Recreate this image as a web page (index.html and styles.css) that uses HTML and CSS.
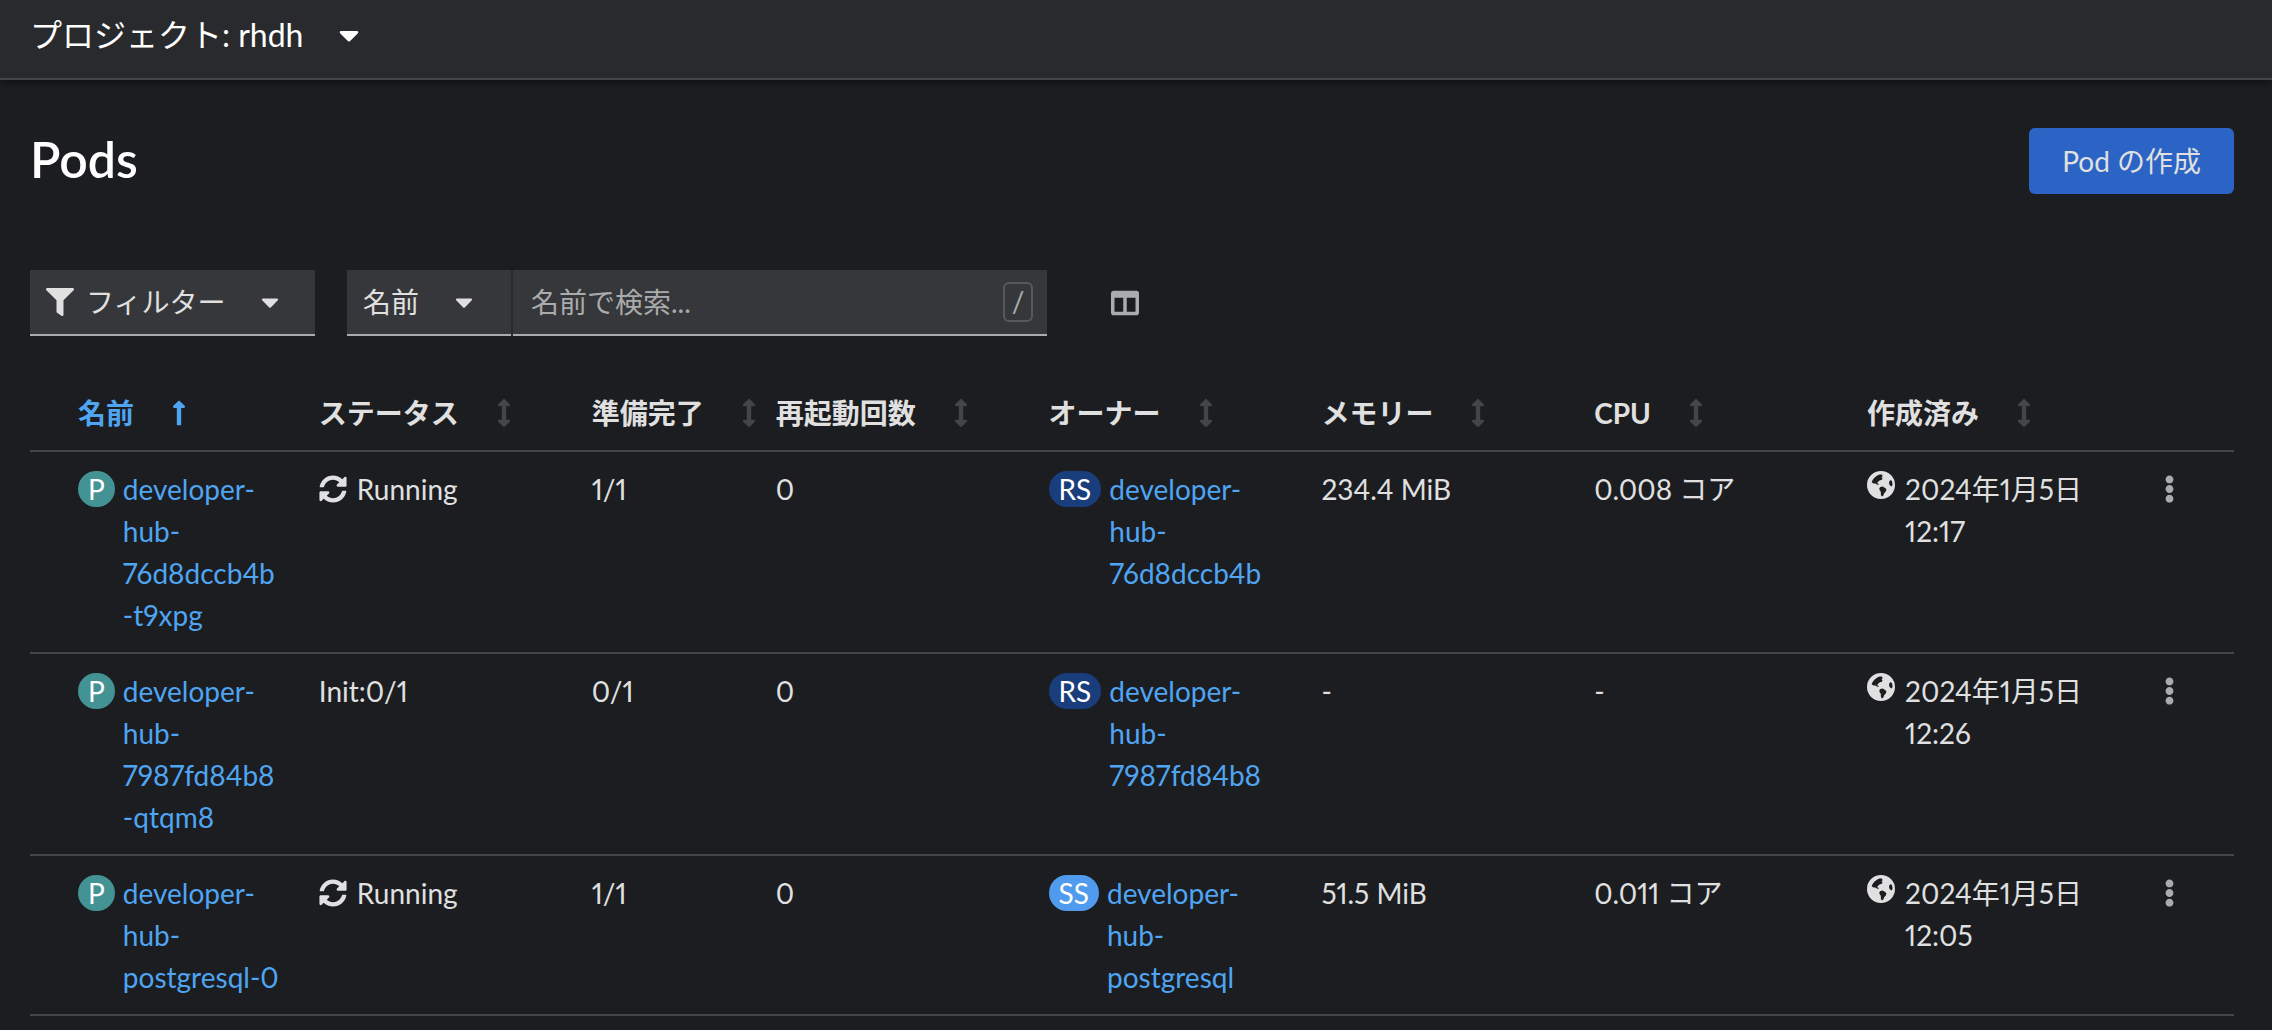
FILE: index.html
```html
<!DOCTYPE html>
<html lang="ja">
<head>
    <meta charset="utf-8">
    <title>Pods</title>
    <link rel="stylesheet" href="styles.css">
</head>
<body>
<!-- Shared icons -->
<svg class="icon-defs" aria-hidden="true">
    <symbol id="caret" viewBox="0 0 320 512"><path d="M31.3 192h257.3c17.8 0 26.7 21.5 14.1 34.1L174.1 354.8c-7.8 7.8-20.5 7.8-28.3 0L17.2 226.1C4.6 213.5 13.5 192 31.3 192z"/></symbol>
    <symbol id="filter" viewBox="0 0 512 512"><path d="M487.976 0H24.028C2.71 0-8.047 25.866 7.058 40.971L192 225.941V432c0 7.831 3.821 15.17 10.237 19.662l80 55.98C298.02 518.69 320 507.493 320 487.98V225.941l184.947-184.97C520.021 25.896 509.338 0 487.976 0z"/></symbol>
    <symbol id="columns" viewBox="0 0 512 512"><path d="M464 32H48C21.49 32 0 53.49 0 80v352c0 26.51 21.49 48 48 48h416c26.51 0 48-21.49 48-48V80c0-26.51-21.49-48-48-48zM224 416H64V160h160v256zm224 0H288V160h160v256z"/></symbol>
    <symbol id="arrow-up" viewBox="0 0 256 512"><path d="M88 166.059V468c0 6.627 5.373 12 12 12h56c6.627 0 12-5.373 12-12V166.059h46.059c21.382 0 32.09-25.851 16.971-40.971l-86.059-86.059c-9.373-9.373-24.569-9.373-33.941 0l-86.059 86.059c-15.119 15.119-4.411 40.971 16.971 40.971H88z"/></symbol>
    <symbol id="arrows-v" viewBox="0 0 256 512"><path d="M214.059 377.941H168V134.059h46.059c21.382 0 32.09-25.851 16.971-40.971L144.971 7.029c-9.373-9.373-24.568-9.373-33.941 0L24.971 93.088c-15.119 15.119-4.411 40.971 16.971 40.971H88v243.882H41.941c-21.382 0-32.09 25.851-16.971 40.971l86.059 86.059c9.373 9.373 24.568 9.373 33.941 0l86.059-86.059c15.12-15.119 4.412-40.971-16.97-40.971z"/></symbol>
    <symbol id="sync" viewBox="0 0 512 512"><path d="M370.72 133.28C339.458 104.008 298.888 87.962 255.848 88c-77.458.068-144.328 53.178-162.791 126.85-1.344 5.363-6.122 9.15-11.651 9.15H24.103c-7.498 0-13.194-6.807-11.807-14.176C33.933 94.924 134.813 8 256 8c66.448 0 126.791 26.136 171.315 68.685L463.03 40.97C478.149 25.851 504 36.559 504 57.941V192c0 13.255-10.745 24-24 24H345.941c-21.382 0-32.09-25.851-16.971-40.971l41.75-41.749zM32 296h134.059c21.382 0 32.09 25.851 16.971 40.971l-41.75 41.75c31.262 29.273 71.835 45.319 114.876 45.28 77.418-.07 144.315-53.144 162.787-126.849 1.344-5.363 6.122-9.15 11.651-9.15h57.304c7.498 0 13.194 6.807 11.807 14.176C478.067 417.076 377.187 504 256 504c-66.448 0-126.791-26.136-171.315-68.685L48.97 471.03C33.851 486.149 8 475.441 8 454.059V320c0-13.255 10.745-24 24-24z"/></symbol>
    <symbol id="globe" viewBox="0 0 28 28"><path fill-rule="evenodd" d="M14 0a14 14 0 1 0 0 28a14 14 0 0 0 0-28zM12.500 3.400l2.300.2.900 1.600-1.300 1.100 1.200 1-1 1.700-1.700.2-1.800 1.500-1.100 1.600 1.300.3.300 1.300-1.700-.3-1.500-1.200-2 .2-1.700-1.300.9-2.300 2-2.400 2.700-2zM13.400 15.900l2.200-.3 2.500 1.300 1.300 1.300-.6 2.200-1.700 1.900-.7 2.200-1.600.9-.9-1.600-.1-3-1.300-1.900-.1-1.800zM23.200 9.200l1.700.5.700 3.500-.8 2.200-1.800-.8-1-2.200.3-2z"/></symbol>
    <symbol id="kebab" viewBox="0 0 192 512"><path d="M96 184c39.800 0 72 32.200 72 72s-32.200 72-72 72-72-32.200-72-72 32.200-72 72-72zM24 80c0 39.800 32.200 72 72 72s72-32.200 72-72S135.800 8 96 8 24 40.200 24 80zm0 352c0 39.800 32.200 72 72 72s72-32.200 72-72-32.200-72-72-72-72 32.200-72 72z"/></symbol>
</svg>

<div class="project-bar">
    <button class="project-toggle" type="button">
        <span>プロジェクト: rhdh</span>
        <svg class="caret"><use href="#caret"/></svg>
    </button>
</div>

<main class="page">
    <header class="page-header">
        <h1 class="page-title">Pods</h1>
        <button class="button-primary" type="button">Pod の作成</button>
    </header>

    <div class="toolbar">
        <button class="toggle toggle-filter" type="button">
            <svg class="icon"><use href="#filter"/></svg>
            <span>フィルター</span>
            <svg class="caret"><use href="#caret"/></svg>
        </button>
        <div class="search-group">
            <button class="toggle toggle-name" type="button">
                <span>名前</span>
                <svg class="caret"><use href="#caret"/></svg>
            </button>
            <label class="search">
                <input class="search-input" type="text" placeholder="名前で検索..." aria-label="名前で検索">
                <kbd class="search-key">/</kbd>
            </label>
        </div>
        <button class="button-plain" type="button" aria-label="列の管理">
            <svg class="icon"><use href="#columns"/></svg>
        </button>
    </div>

    <table class="pods">
        <colgroup>
            <col class="col"><col class="col"><col class="col-narrow"><col class="col"><col class="col">
            <col class="col"><col class="col"><col class="col"><col>
        </colgroup>
        <thead>
        <tr>
            <th aria-sort="ascending"><button class="sort sort-active" type="button">名前<svg class="sort-icon"><use href="#arrow-up"/></svg></button></th>
            <th><button class="sort" type="button">ステータス<svg class="sort-icon"><use href="#arrows-v"/></svg></button></th>
            <th><button class="sort" type="button">準備完了<svg class="sort-icon"><use href="#arrows-v"/></svg></button></th>
            <th><button class="sort" type="button">再起動回数<svg class="sort-icon"><use href="#arrows-v"/></svg></button></th>
            <th><button class="sort" type="button">オーナー<svg class="sort-icon"><use href="#arrows-v"/></svg></button></th>
            <th><button class="sort" type="button">メモリー<svg class="sort-icon"><use href="#arrows-v"/></svg></button></th>
            <th><button class="sort" type="button">CPU<svg class="sort-icon"><use href="#arrows-v"/></svg></button></th>
            <th><button class="sort" type="button">作成済み<svg class="sort-icon"><use href="#arrows-v"/></svg></button></th>
            <th></th>
        </tr>
        </thead>
        <tbody>
        <tr>
            <td><div class="resource"><span class="badge badge-pod">P</span><a class="link" href="#">developer-hub-76d8dccb4b-t9xpg</a></div></td>
            <td><div class="status"><svg class="icon"><use href="#sync"/></svg><span>Running</span></div></td>
            <td>1/1</td>
            <td>0</td>
            <td><div class="resource"><span class="badge badge-rs">RS</span><a class="link" href="#">developer-hub-76d8dccb4b</a></div></td>
            <td>234.4 MiB</td>
            <td>0.008 コア</td>
            <td><div class="timestamp"><svg class="icon"><use href="#globe"/></svg><time>2024年1月5日 12:17</time></div></td>
            <td><button class="kebab" type="button" aria-label="アクション"><svg class="kebab-icon"><use href="#kebab"/></svg></button></td>
        </tr>
        <tr>
            <td><div class="resource"><span class="badge badge-pod">P</span><a class="link" href="#">developer-hub-7987fd84b8-qtqm8</a></div></td>
            <td>Init:0/1</td>
            <td>0/1</td>
            <td>0</td>
            <td><div class="resource"><span class="badge badge-rs">RS</span><a class="link" href="#">developer-hub-7987fd84b8</a></div></td>
            <td>-</td>
            <td>-</td>
            <td><div class="timestamp"><svg class="icon"><use href="#globe"/></svg><time>2024年1月5日 12:26</time></div></td>
            <td><button class="kebab" type="button" aria-label="アクション"><svg class="kebab-icon"><use href="#kebab"/></svg></button></td>
        </tr>
        <tr>
            <td><div class="resource"><span class="badge badge-pod">P</span><a class="link" href="#">developer-hub-postgresql-0</a></div></td>
            <td><div class="status"><svg class="icon"><use href="#sync"/></svg><span>Running</span></div></td>
            <td>1/1</td>
            <td>0</td>
            <td><div class="resource"><span class="badge badge-ss">SS</span><a class="link" href="#">developer-hub-postgresql</a></div></td>
            <td>51.5 MiB</td>
            <td>0.011 コア</td>
            <td><div class="timestamp"><svg class="icon"><use href="#globe"/></svg><time>2024年1月5日 12:05</time></div></td>
            <td><button class="kebab" type="button" aria-label="アクション"><svg class="kebab-icon"><use href="#kebab"/></svg></button></td>
        </tr>
        </tbody>
    </table>
</main>
</body>
</html>
```

FILE: styles.css
```css
* {
    box-sizing: border-box;
}

body {
    margin: 0;
    background: #1b1d21;
    color: #e0e0e0;
    font-family: Lato, "Noto Sans CJK JP", sans-serif;
    font-size: 28px;
    line-height: 42px;
    font-variant-numeric: proportional-nums;
}

button,
input,
kbd {
    font: inherit;
    color: inherit;
}

button {
    display: flex;
    align-items: center;
    padding: 0;
    border: 0;
    background: none;
    white-space: nowrap;
}

svg {
    flex: none;
    fill: currentColor;
}

.icon-defs {
    display: none;
}

.icon {
    width: 28px;
    height: 28px;
}

.caret {
    width: 18px;
    height: 28px;
}

/* Project selector */
.project-bar {
    position: relative;
    height: 80px;
    padding: 14px 30px;
    background: #292a2d;
    border-bottom: 2px solid #444548;
    box-shadow: 0 2px 8px rgba(0, 0, 0, 0.5);
}

.project-toggle {
    gap: 36px;
    color: #fff;
    font-size: 32px;
}

.project-toggle .caret {
    width: 20px;
    height: 32px;
}

.page {
    padding: 48px 38px 0 30px;
}

.page-header {
    display: flex;
    align-items: flex-start;
    justify-content: space-between;
    margin-bottom: 76px;
}

.page-title {
    margin: 0;
    color: #fff;
    font-size: 50px;
    font-weight: 600;
    line-height: 62px;
}

.button-primary {
    height: 66px;
    padding: 0 33px;
    border-radius: 6px;
    background: #2b64c5;
}

/* Toolbar */
.toolbar {
    display: flex;
    align-items: center;
    gap: 32px;
    margin-bottom: 40px;
}

.toggle {
    height: 66px;
    padding: 0 16px;
    background: #36373a;
    border-bottom: 2px solid #aaabac;
}

.toggle-filter {
    width: 285px;
}

.toggle-filter .icon {
    margin-right: 12px;
}

.toggle .caret {
    margin-left: 36px;
}

.search-group {
    display: flex;
    gap: 2px;
    width: 700px;
    background: #292a2d;
}

.toggle-name {
    width: 164px;
}

.search {
    display: flex;
    flex: 1;
    align-items: center;
    height: 66px;
    padding: 0 14px 0 18px;
    background: #36373a;
    border-bottom: 2px solid #aaabac;
}

.search-input {
    flex: 1;
    min-width: 0;
    padding: 0;
    border: 0;
    outline: 0;
    background: none;
}

.search-input::placeholder {
    color: #aaabac;
}

.search-key {
    width: 30px;
    height: 40px;
    border: 2px solid #57585a;
    border-radius: 6px;
    color: #aaabac;
    line-height: 34px;
    text-align: center;
}

.button-plain {
    padding: 0 32px;
    color: #aaabac;
}

/* Pods table */
.pods {
    width: 100%;
    table-layout: fixed;
    border-collapse: collapse;
}

.col {
    width: 12.38%;
}

.col-narrow {
    width: 8.35%;
}

.pods th,
.pods td {
    padding: 16px 24px 16px 16px;
    border-bottom: 2px solid #444548;
    text-align: left;
    vertical-align: top;
}

.pods th:first-child,
.pods td:first-child {
    padding-left: 48px;
}

.pods th {
    white-space: nowrap;
}

.sort {
    gap: 38px;
    font-weight: bold;
}

.sort-active,
.sort-active .sort-icon {
    color: #4fa5f2;
}

.sort-icon {
    width: 14px;
    height: 28px;
    color: #444548;
}

.resource,
.status,
.timestamp {
    display: flex;
}

.resource {
    gap: 8px;
}

.status,
.timestamp {
    gap: 10px;
}

.status {
    align-items: center;
}

.timestamp .icon {
    margin-top: 3px;
}

.badge {
    flex: none;
    min-width: 36px;
    height: 36px;
    margin-top: 3px;
    padding: 0 10px;
    border-radius: 18px;
    color: #fff;
    line-height: 36px;
    text-align: center;
}

.badge-pod {
    background: #439294;
}

.badge-rs {
    background: #1a3d7c;
}

.badge-ss {
    background: #519bee;
}

.link {
    min-width: 0;
    color: #4fa5f2;
    text-decoration: none;
    overflow-wrap: anywhere;
}

.kebab {
    height: 42px;
    padding: 0 24px;
    color: #aaabac;
}

.kebab-icon {
    width: 11px;
    height: 28px;
}
```
